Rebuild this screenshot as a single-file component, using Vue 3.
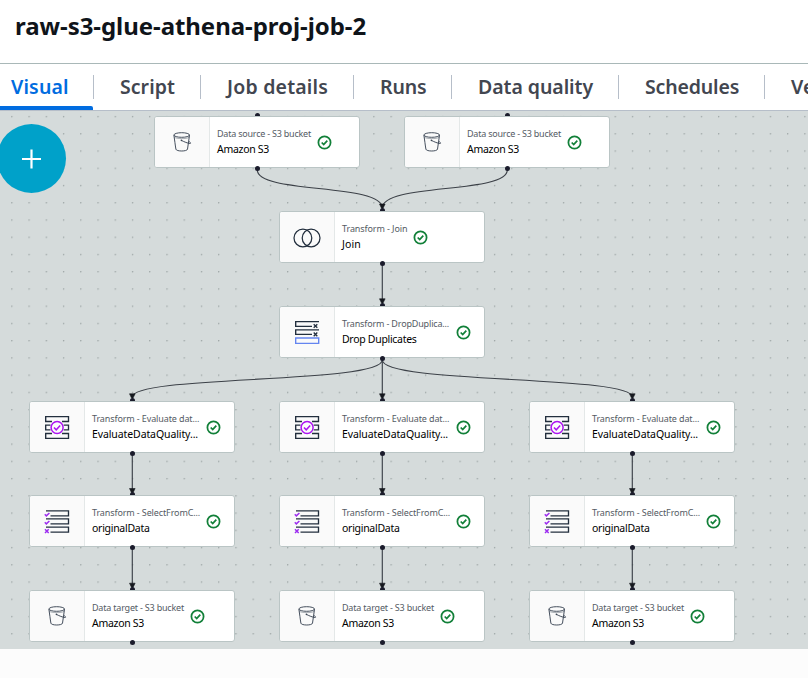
<script setup>
const tabs = [
  { label: 'Visual', width: 94, cls: 'active', track: 0.15 },
  { label: 'Script', width: 107, track: 0.05 },
  { label: 'Job details', width: 153, track: 0.2 },
  { label: 'Runs', width: 98, track: -0.15 },
  { label: 'Data quality', width: 167, track: -0.06 },
  { label: 'Schedules', width: 146, track: -0.15 },
  { label: 'Version Control', width: 190, track: 0 },
]

const node = (x, y, icon, kind, name, kindTrack, nameTrack) => ({ x, y, icon, kind, name, kindTrack, nameTrack })
const columns = [29, 279, 529]
const nodes = [
  node(154, 116, 'bucket', 'Data source - S3 bucket', 'Amazon S3', -0.22, -0.3),
  node(404, 116, 'bucket', 'Data source - S3 bucket', 'Amazon S3', -0.22, -0.3),
  node(279, 211, 'join', 'Transform - Join', 'Join', -0.1, 0.1),
  node(279, 306, 'drop', 'Transform - DropDuplica...', 'Drop Duplicates', -0.16, -0.3),
  ...columns.map((x) => node(x, 401, 'quality', 'Transform - Evaluate dat...', 'EvaluateDataQuality...', -0.12, -0.1)),
  ...columns.map((x) => node(x, 495, 'select', 'Transform - SelectFromC...', 'originalData', -0.12, -0.28)),
  ...columns.map((x) => node(x, 590, 'bucket', 'Data target - S3 bucket', 'Amazon S3', -0.2, -0.3)),
]

const edges = [
  'M257.3 59C257.3 83 382.3 72 382.3 97',
  'M507.3 59C507.3 83 382.3 72 382.3 97',
  'M382.3 154V190',
  'M382.3 249C382.3 273 132.3 264 132.3 286',
  'M382.3 249V286',
  'M382.3 249C382.3 273 632.3 264 632.3 286',
  ...[132.3, 382.3, 632.3].flatMap((x) => [`M${x} 343V381`, `M${x} 438V476`]),
]
const arrows = [
  [382.3, 97.5], [382.3, 192.3],
  ...[132.3, 382.3, 632.3].flatMap((x) => [[x, 287.3], [x, 382], [x, 476.7]]),
]
</script>

<template>
  <div class="page">
    <header class="header"><h1>raw-s3-glue-athena-proj-job-2</h1></header>
    <nav class="tabs">
      <div v-for="t in tabs" :key="t.label" class="tab" :class="t.cls" :style="{ width: t.width + 'px', letterSpacing: t.track + 'px' }">
        <span>{{ t.label }}</span>
      </div>
    </nav>
    <main class="canvas">
      <svg class="layer" width="808" height="538" viewBox="0 0 808 538">
        <defs>
          <pattern id="grid" width="17.24" height="17.24" patternUnits="userSpaceOnUse" x="11.2" y="4.9">
            <circle cx=".7" cy=".7" r=".65" fill="#8c9696" />
          </pattern>
        </defs>
        <rect width="808" height="538" fill="url(#grid)" />
        <path v-for="d in edges" :key="d" :d="d" fill="none" stroke="#3c4148" stroke-width="1.15" />
        <path v-for="a in arrows" :key="a.join()" :d="`M${a[0] - 2.8} ${a[1] - 4.5}h5.6l-2.2 4.5h-1.2z`" fill="#16191f" stroke="#16191f" stroke-width=".6" />
      </svg>

      <div v-for="n in nodes" :key="n.x + '-' + n.y" class="node" :style="{ left: n.x + 'px', top: n.y - 111 + 'px' }">
        <i class="port in"></i>
        <div class="card">
          <div class="glyph">
            <svg v-if="n.icon === 'bucket'" width="20" height="22" viewBox="0 0 20 22" fill="none" stroke="#3b4654" stroke-width=".95">
              <ellipse cx="9.7" cy="4" rx="7.8" ry="2.3" />
              <path d="M1.9 4.2C2.7 9.5 3.2 14 3.9 18.2c.4 2.4 11.2 2.4 11.6 0L17.5 4.2" />
              <path d="M2.4 6.3c2.2 1.6 12 1.9 14.8 0" stroke-opacity=".45" />
              <path d="M9.6 9.5c2.8 1.4 5.6 2.6 8.3 3 1.3 0 .7-1-.8-2" />
              <circle cx="9.4" cy="9.4" r=".8" fill="#3b4654" stroke="none" />
            </svg>
            <svg v-else-if="n.icon === 'join'" class="low" width="30" height="22" viewBox="0 0 30 22" fill="none" stroke="#232f3e" stroke-width="1.25">
              <circle cx="10.9" cy="11" r="8.9" /><circle cx="19.1" cy="11" r="8.9" />
            </svg>
            <svg v-else-if="n.icon === 'drop'" class="low" width="26" height="26" viewBox="0 0 26 26" fill="none" stroke="#232f3e" stroke-width="1.35">
              <path d="M25 1.6H1.7V6.4H18M25 9.8H1.7v4.6H18" />
              <path d="M19.7 4.2l3.6 3.6m0-3.6l-3.6 3.6M19.7 12.6l3.6 3.6m0-3.6l-3.6 3.6" />
              <path d="M1.7 18h23v5.4h-23z" stroke="#6485f0" />
            </svg>
            <svg v-else-if="n.icon === 'quality'" class="low" width="26" height="26" viewBox="0 0 26 26" fill="none" stroke="#232f3e" stroke-width="1.35">
              <path d="M8 6.5H1.7V1.6h22.8v4.9H18M6.5 10.1H1.7v4.8h4.8M19.7 10.1h4.8v4.8h-4.8M8 18.5H1.7v4.9h22.8v-4.9H18" />
              <g stroke="#ad13f2" stroke-width="1.5"><circle cx="13.1" cy="12.5" r="6" /><path d="M10 12.5l2.2 2.3 4-4.2" /></g>
            </svg>
            <svg v-else class="low" width="26" height="26" viewBox="0 0 26 26" fill="none" stroke="#232f3e" stroke-width="1.35">
              <path d="M2 1.8h22.5v5H6.5M2 9.9h22.5v5H6.5M2 18.1h22.5v5H6.5" />
              <path d="M.8 5.3l1.5 1.6L5.4 4M.8 13.3l1.5 1.6L5.4 12M1 20.3l3.7 3.7m0-3.7L1 24" stroke="#9d2ef0" stroke-width="1.5" />
            </svg>
          </div>
          <div class="copy" :class="{ full: n.kind.endsWith('...') }">
            <span class="kind" :style="{ letterSpacing: n.kindTrack + 'px' }">{{ n.kind }}</span>
            <span class="name" :style="{ letterSpacing: n.nameTrack + 'px' }">{{ n.name }}</span>
          </div>
          <svg class="status" width="15" height="15" viewBox="0 0 15 15" fill="none" stroke="#128039" stroke-width="1.75">
            <circle cx="7.5" cy="7.5" r="6.1" /><path d="M4.7 7.5l2 2 3.6-3.9" />
          </svg>
        </div>
        <i class="port out"></i>
      </div>

      <button class="add" aria-label="Add node">
        <svg width="20" height="20" viewBox="0 0 20 20" stroke="#fff" stroke-width="2.2"><path d="M0 10h19M9.5 .5v19" /></svg>
      </button>
    </main>
    <footer class="footer"></footer>
  </div>
</template>

<style>
body { margin: 0; }
</style>
<style scoped>
.page { width: 808px; height: 678px; overflow: hidden; background: #fff; font-family: "Noto Sans", "Open Sans", sans-serif; display: flex; flex-direction: column; }
.header { height: 64px; flex: none; border-bottom: 1px solid #a9b8b8; box-sizing: border-box; padding: 8px 0 0 15px; }
h1 { margin: 0; font-size: 24px; line-height: 36px; font-weight: 700; color: #0f141a; letter-spacing: -0.05px; white-space: nowrap; }
.tabs { height: 46px; flex: none; display: flex; width: 1000px; border-bottom: 1px solid #b6bec9; }
.tab { position: relative; flex: none; box-sizing: border-box; padding: 9px 0 0 26px; font-size: 19.5px; line-height: 28px; font-weight: 600; color: #424650; white-space: nowrap; background: linear-gradient(#b6bec9, #b6bec9) right 11px / 1px 24px no-repeat; }
.tab.active { color: #006ce0; padding-left: 11px; }
.tab.active::after { content: ""; position: absolute; left: 0; bottom: 0; width: 93px; height: 4px; background: #006ce0; border-radius: 0 2px 0 0; }
.canvas { position: relative; height: 538px; flex: none; background: #d5dbdb; overflow: hidden; }
.layer { position: absolute; inset: 0; }
.node { position: absolute; width: 206.4px; height: 52px; }
.card { position: relative; display: flex; align-items: center; height: 52px; box-sizing: border-box; background: #fff; border: 1px solid #bac5c5; border-radius: 3px; overflow: hidden; }
.glyph { width: 54px; height: 100%; flex: none; display: flex; align-items: center; justify-content: center; background: #fafafa; border-right: 1px solid #e4e8e8; }
.glyph .low { margin-top: 1px; }
.copy { display: flex; flex-direction: column; margin-left: 7px; padding-bottom: 1px; white-space: nowrap; }
.copy.full { width: 108px; }
.kind { font-size: 9px; line-height: 14px; color: #545b64; }
.name { font-size: 10.5px; line-height: 16px; color: #000; }
.status { margin-left: 6px; flex: none; }
.port { position: absolute; left: 100.5px; width: 5px; height: 5px; border-radius: 50%; background: #1b1c2c; }
.port.in { top: -3px; }
.port.out { bottom: -3px; }
.add { position: absolute; left: -3px; top: 13px; width: 69px; height: 69px; border: 0; padding: 0; border-radius: 50%; background: #00a1c9; display: flex; align-items: center; justify-content: center; }
.footer { flex: 1; background: #fcfcfc; }
</style>
